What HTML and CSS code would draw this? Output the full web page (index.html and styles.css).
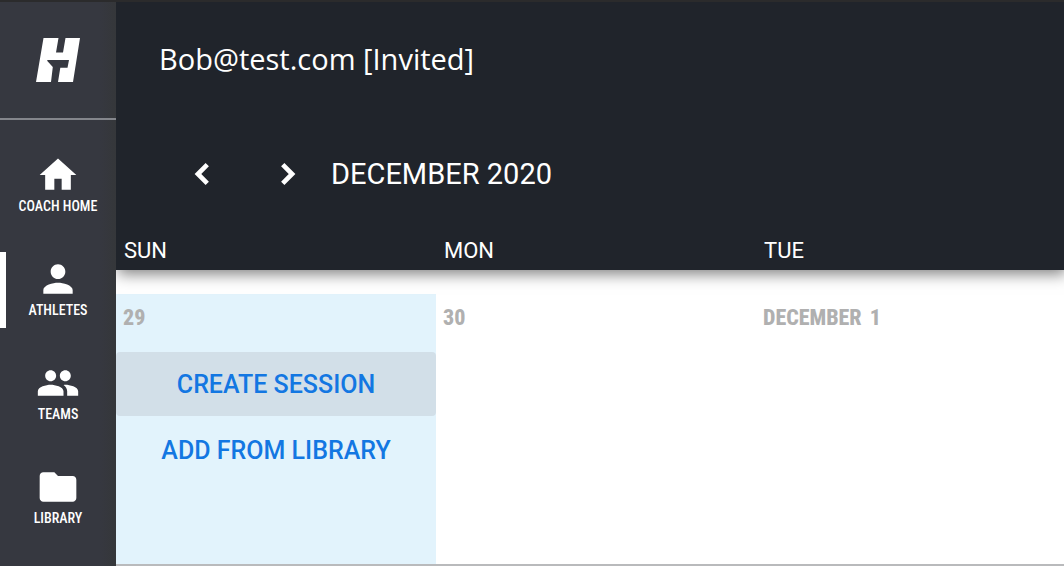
FILE: index.html
```html
<!DOCTYPE html>
<html lang="en">
<head>
    <meta charset="UTF-8">
    <meta name="viewport" content="width=device-width, initial-scale=1.0">
    <title>Coach Calendar</title>
    <link rel="stylesheet" href="styles.css">
</head>
<body>

    <!-- Sidebar -->
    <aside class="sidebar">
        <a class="logo" href="#" aria-label="Home">
            <svg width="44" height="44" viewBox="0 0 44 44"><path fill="#fff" d="M7.500 0H22.500L20 14.500H27L29.500 0H44L37 44H22L24.300 29.700H31.500L33 22H11.300V23L16.800 29L15 44H0Z"/></svg>
        </a>
        <nav class="nav">
            <a class="nav-item" href="#">
                <svg viewBox="0 0 24 24"><path d="M10 20v-6h4v6h5v-8h3L12 3 2 12h3v8z"/></svg>
                <span>COACH HOME</span>
            </a>
            <a class="nav-item active" href="#">
                <svg viewBox="0 0 24 24"><path d="M12 12c2.210 0 4-1.790 4-4s-1.790-4-4-4-4 1.790-4 4 1.790 4 4 4zm0 2c-2.670 0-8 1.340-8 4v2h16v-2c0-2.660-5.330-4-8-4z"/></svg>
                <span>ATHLETES</span>
            </a>
            <a class="nav-item" href="#">
                <svg viewBox="0 0 24 24"><path d="M16 11c1.660 0 2.990-1.340 2.990-3S17.660 5 16 5s-3 1.340-3 3 1.340 3 3 3zm-8 0c1.660 0 2.990-1.340 2.990-3S9.660 5 8 5 5 6.340 5 8s1.340 3 3 3zm0 2c-2.330 0-7 1.170-7 3.500V19h14v-2.500C15 14.170 10.330 13 8 13zm8 0c-.29 0-.62.020-.97.050 1.160.84 1.970 1.970 1.970 3.450V19h6v-2.500c0-2.330-4.670-3.500-7-3.500z"/></svg>
                <span>TEAMS</span>
            </a>
            <a class="nav-item" href="#">
                <svg viewBox="0 0 24 24"><path d="M10 4H4c-1.100 0-1.990.9-1.990 2L2 18c0 1.100.9 2 2 2h16c1.100 0 2-.9 2-2V8c0-1.100-.9-2-2-2h-8l-2-2z"/></svg>
                <span>LIBRARY</span>
            </a>
        </nav>
    </aside>

    <!-- Calendar -->
    <main class="content">
        <header class="header">
            <h1 class="athlete">Bob@test.com [Invited]</h1>
            <div class="month-nav">
                <button class="arrow-btn" aria-label="Previous month">
                    <svg viewBox="0 0 24 24"><path d="M16.500 4L8.500 12l8 8"/></svg>
                </button>
                <button class="arrow-btn" aria-label="Next month">
                    <svg viewBox="0 0 24 24"><path d="M7.500 4L15.500 12l-8 8"/></svg>
                </button>
                <h2 class="month">DECEMBER 2020</h2>
            </div>
            <div class="week weekdays">
                <div>SUN</div>
                <div>MON</div>
                <div>TUE</div>
            </div>
        </header>

        <div class="week days">
            <section class="day selected">
                <div class="date">29</div>
                <button class="day-btn hovered">CREATE SESSION</button>
                <button class="day-btn">ADD FROM LIBRARY</button>
            </section>
            <section class="day">
                <div class="date">30</div>
            </section>
            <section class="day">
                <div class="date"><span>DECEMBER</span><span>1</span></div>
            </section>
        </div>
    </main>

</body>
</html>
```
FILE: styles.css
```css
* {
    margin: 0;
    padding: 0;
    box-sizing: border-box;
}
body {
    font-family: Roboto, "Liberation Sans", sans-serif;
    background-color: #fff;
    color: #fff;
    min-height: 100vh;
    display: flex;
    border-top: 2px solid #2b2b2c;
    overflow: hidden;
}
button {
    font-family: inherit;
    background: none;
    border: none;
    cursor: pointer;
}
/* Sidebar */
.sidebar {
    flex: none;
    width: 116px;
    background: linear-gradient(to right, #363840 86%, #35373a);
}
.logo {
    display: flex;
    justify-content: center;
    align-items: center;
    height: 118px;
    border-bottom: 2px solid #84868c;
}
.nav {
    display: flex;
    flex-direction: column;
    gap: 28px;
    padding-top: 28px;
}
.nav-item {
    height: 76px;
    padding-top: 5px;
    display: flex;
    flex-direction: column;
    align-items: center;
    border-left: 6px solid transparent;
    border-right: 6px solid transparent;
    color: #fff;
    font-family: "Roboto Condensed", "Liberation Sans Narrow", sans-serif;
    font-size: 14px;
    font-weight: 500;
    line-height: 18px;
    white-space: nowrap;
    text-decoration: none;
}
.nav-item.active {
    border-left-color: #fff;
}
.nav-item svg {
    width: 44px;
    height: 44px;
    fill: #fff;
}
/* Header */
.content {
    flex: 1;
    min-width: 0;
    display: flex;
    flex-direction: column;
}
.header {
    position: relative;
    background-color: #20242b;
    box-shadow: 2px 4px 14px rgba(0, 0, 0, 0.5);
    clip-path: inset(0 0 -30px 0);
}
.athlete {
    padding: 37px 43px 0;
    font-family: "Open Sans", "Noto Sans", sans-serif;
    font-size: 29px;
    font-weight: normal;
    line-height: 40px;
}
.month-nav {
    display: flex;
    align-items: center;
    padding: 71px 43px 0;
}
.arrow-btn {
    width: 86px;
    height: 48px;
}
.arrow-btn svg {
    display: block;
    width: 28px;
    height: 28px;
    margin: 0 auto;
    fill: none;
    stroke: #fff;
    stroke-width: 4;
}
.month {
    font-size: 29px;
    font-weight: normal;
}
/* Week grid */
.week {
    display: grid;
    grid-template-columns: repeat(3, minmax(320px, 1fr));
}
.weekdays {
    padding: 39px 0 5px;
    overflow: hidden;
    font-size: 22px;
    line-height: 28px;
}
.weekdays div {
    padding-left: 8px;
}
.days {
    flex: 1;
    padding-top: 24px;
    border-bottom: 2px solid #b9babc;
}
.day {
    display: flex;
    flex-direction: column;
    gap: 2px;
}
.day.selected {
    background-color: #e2f3fc;
}
.date {
    display: flex;
    gap: 8px;
    height: 56px;
    padding: 9px 7px;
    color: #b0b0b0;
    font-family: "Roboto Condensed", "Liberation Sans Narrow", sans-serif;
    font-size: 22px;
    font-weight: 800;
    line-height: 30px;
}
.day-btn {
    height: 64px;
    border-radius: 4px;
    color: #1377e2;
    font-size: 25px;
    font-weight: 500;
}
.day-btn.hovered {
    background-color: #d2dfe8;
}
```
